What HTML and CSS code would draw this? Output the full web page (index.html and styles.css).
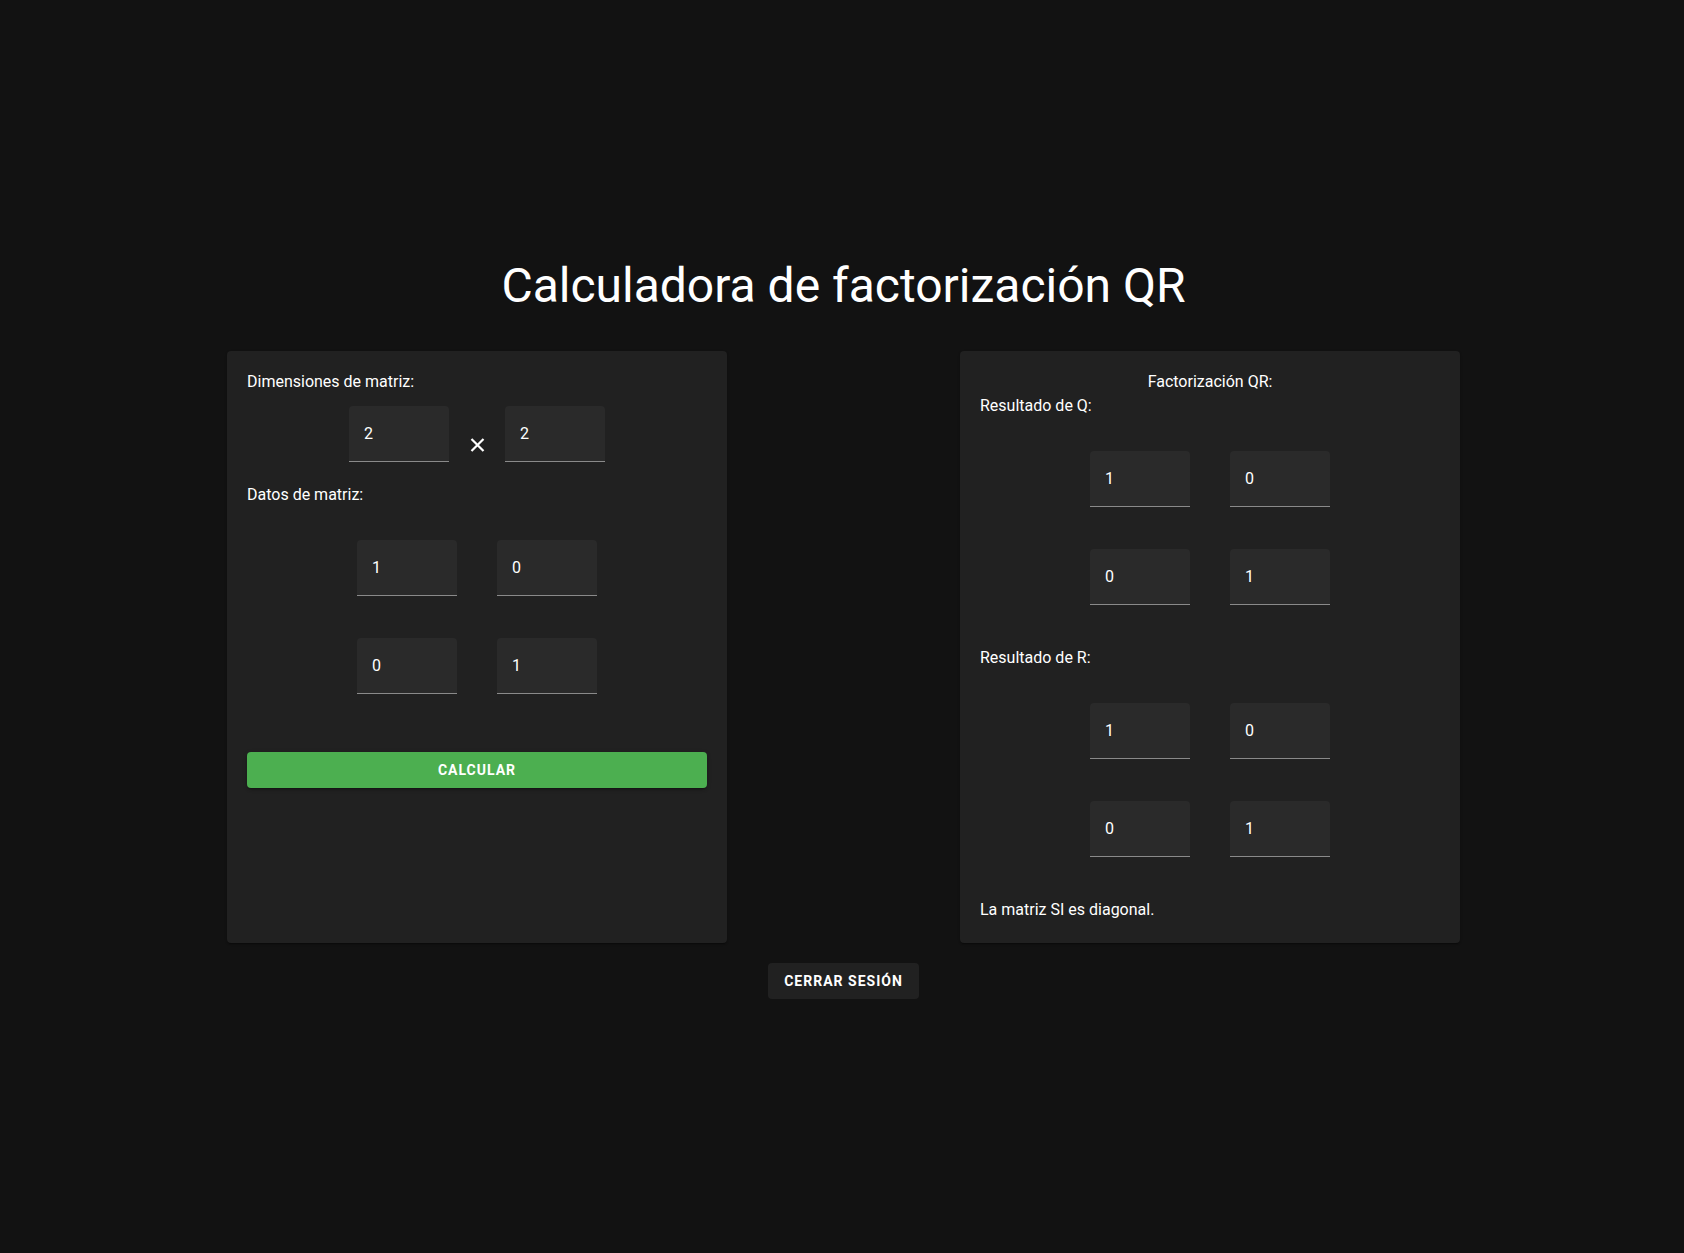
FILE: index.html
```html
<!DOCTYPE html>
<html lang="es">
<head>
<meta charset="utf-8">
<title>Calculadora de factorización QR</title>
<link rel="stylesheet" href="styles.css">
</head>
<body>
<main class="page">
  <h1 class="title">Calculadora de factorización QR</h1>
  <div class="cards">
    <section class="card">
      <p class="label">Dimensiones de matriz:</p>
      <div class="dims">
        <div class="field"><input class="field-input" type="text" value="2"></div>
        <div class="times">
          <svg width="15" height="14" viewBox="0 0 15 14"><path d="M1.5 1 L13.5 13 M13.5 1 L1.5 13" stroke="#fff" stroke-width="2.2" fill="none"/></svg>
        </div>
        <div class="field"><input class="field-input" type="text" value="2"></div>
      </div>
      <p class="label label-gap">Datos de matriz:</p>
      <div class="matrix matrix-input">
        <div class="field"><input class="field-input" type="text" value="1"></div>
        <div class="field"><input class="field-input" type="text" value="0"></div>
        <div class="field"><input class="field-input" type="text" value="0"></div>
        <div class="field"><input class="field-input" type="text" value="1"></div>
      </div>
      <button class="btn-primary" type="button">Calcular</button>
    </section>
    <section class="card">
      <p class="label label-center">Factorización QR:</p>
      <p class="label">Resultado de Q:</p>
      <div class="matrix">
        <div class="field"><input class="field-input" type="text" value="1" readonly></div>
        <div class="field"><input class="field-input" type="text" value="0" readonly></div>
        <div class="field"><input class="field-input" type="text" value="0" readonly></div>
        <div class="field"><input class="field-input" type="text" value="1" readonly></div>
      </div>
      <p class="label">Resultado de R:</p>
      <div class="matrix">
        <div class="field"><input class="field-input" type="text" value="1" readonly></div>
        <div class="field"><input class="field-input" type="text" value="0" readonly></div>
        <div class="field"><input class="field-input" type="text" value="0" readonly></div>
        <div class="field"><input class="field-input" type="text" value="1" readonly></div>
      </div>
      <p class="label">La matriz SI es diagonal.</p>
    </section>
  </div>
  <div class="footer">
    <button class="btn-secondary" type="button">Cerrar sesión</button>
  </div>
</main>
</body>
</html>
```
FILE: styles.css
```css
* { box-sizing: border-box; }

html, body {
  margin: 0;
  padding: 0;
  background: #121212;
  color: #ffffff;
  font-family: Roboto, "Liberation Sans", Arial, sans-serif;
}

.page {
  padding-top: 258px;
  padding-left: 3px;
  display: flex;
  flex-direction: column;
  align-items: center;
}

.title {
  margin: 0;
  font-size: 48px;
  font-weight: 400;
  line-height: 56px;
  text-align: center;
}

.cards {
  margin-top: 37px;
  width: 1233px;
  display: flex;
  justify-content: space-between;
  align-items: stretch;
}

.card {
  width: 500px;
  background: #212121;
  border-radius: 4px;
  padding: 19px 20px 21px;
  box-shadow: 0 2px 1px -1px rgba(0,0,0,0.2), 0 1px 1px 0 rgba(0,0,0,0.14), 0 1px 3px 0 rgba(0,0,0,0.12);
  display: flex;
  flex-direction: column;
}

.label {
  margin: 0;
  font-size: 16px;
  line-height: 24px;
  font-weight: 400;
}

.label-center { text-align: center; }

.label-gap { margin-top: 21px; }

.dims {
  margin-top: 12px;
  display: flex;
  justify-content: center;
  align-items: flex-start;
}

.times {
  width: 56px;
  height: 56px;
  display: flex;
  justify-content: center;
  padding-top: 32px;
}

.field {
  width: 100px;
  height: 56px;
  background: #2a2a2a;
  border-top-left-radius: 4px;
  border-top-right-radius: 4px;
  border-bottom: 1px solid #8a8a8a;
  display: flex;
  align-items: center;
}

.field-input {
  width: 100%;
  border: 0;
  outline: 0;
  background: transparent;
  color: #ffffff;
  font-family: Roboto, "Liberation Sans", Arial, sans-serif;
  font-size: 16px;
  line-height: 23px;
  padding: 0 15px;
  margin: 0;
}

.matrix {
  display: grid;
  grid-template-columns: 100px 100px;
  column-gap: 40px;
  row-gap: 42px;
  justify-content: center;
  padding-top: 33px;
  padding-bottom: 41px;
}

.matrix-input {
  padding-bottom: 58px;
}

.btn-primary {
  width: 100%;
  height: 36px;
  border: 0;
  border-radius: 4px;
  background: #4caf50;
  color: #ffffff;
  font-family: Roboto, "Liberation Sans", Arial, sans-serif;
  font-size: 14px;
  font-weight: 700;
  letter-spacing: 1px;
  text-transform: uppercase;
  box-shadow: 0 3px 1px -2px rgba(0,0,0,0.2), 0 2px 2px 0 rgba(0,0,0,0.14), 0 1px 5px 0 rgba(0,0,0,0.12);
}

.footer {
  margin-top: 20px;
  display: flex;
  justify-content: center;
}

.btn-secondary {
  height: 36px;
  padding: 6px 16px;
  border: 0;
  border-radius: 4px;
  background: #212121;
  color: #ffffff;
  font-family: Roboto, "Liberation Sans", Arial, sans-serif;
  font-size: 14px;
  font-weight: 700;
  letter-spacing: 1px;
  text-transform: uppercase;
}
```
